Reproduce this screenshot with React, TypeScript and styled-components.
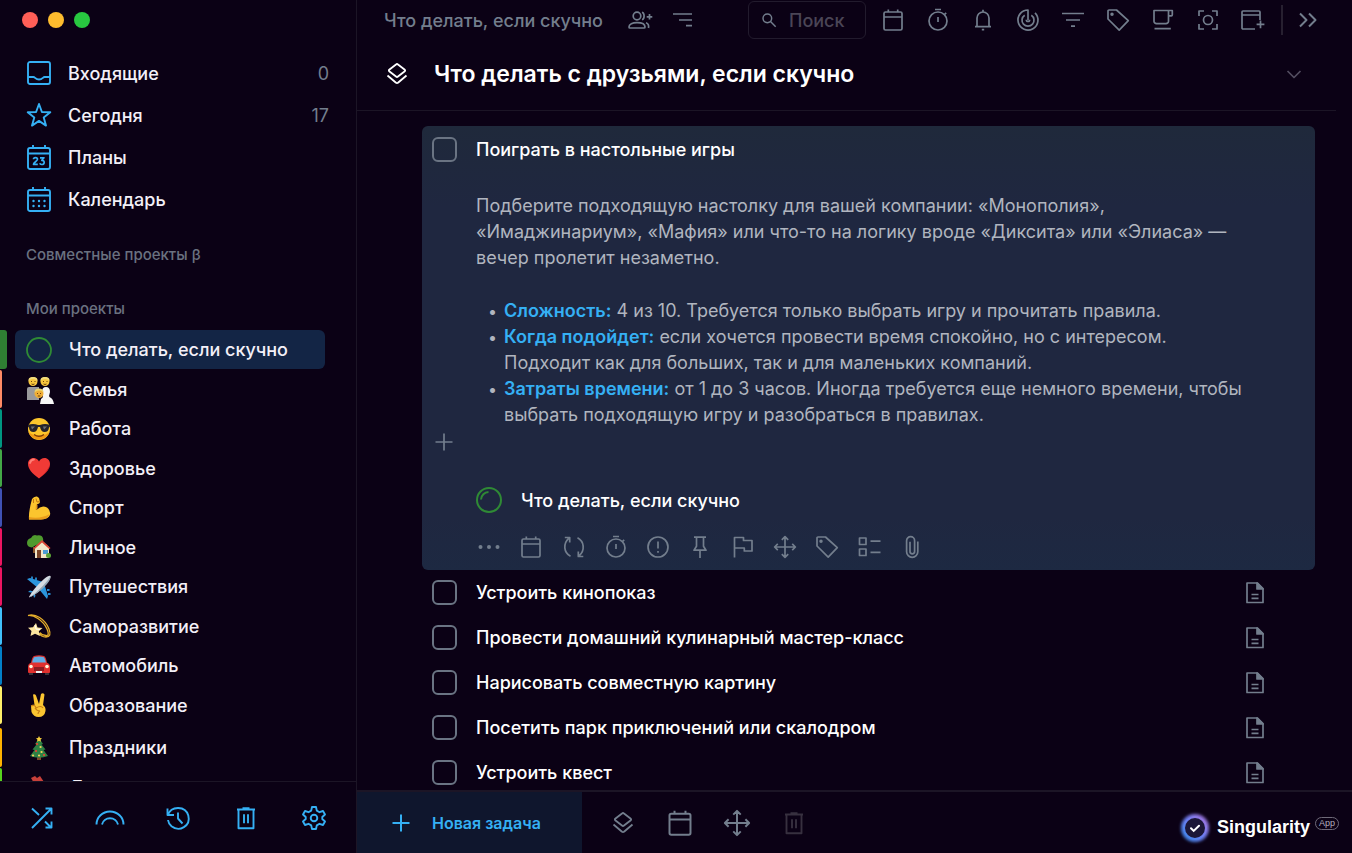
import React from 'react';
import styled, { createGlobalStyle } from 'styled-components';

const color = {
  page: '#0b0115',
  line: '#1c1526',
  blue: '#35b0f4',
  text: '#f3f0f8',
  muted: '#737e8d',
  faint: '#4a4556',
  card: '#1f2740',
  active: '#132545',
};

const GlobalStyle = createGlobalStyle`
  *, *::before, *::after { box-sizing: border-box; }
  body {
    margin: 0;
    background: ${color.page};
    color: ${color.text};
    font-family: Inter, "Noto Sans", sans-serif;
    font-size: 18px;
    font-weight: 500;
  }
  button, input { font: inherit; color: inherit; }
  ul, h1, h2, p { margin: 0; padding: 0; }
  ul { list-style: none; }
`;

/* ---------- icons ---------- */

const shapes: Record<string, React.ReactNode> = {
  inbox: (
    <>
      <rect x="1" y="1" width="22" height="22" rx="2" />
      <path d="M1 16h5.500c1.500 0 2 2.500 5.500 2.500s4-2.500 5.500-2.500H23" />
    </>
  ),
  star: <path d="M12 1l2.900 8 8.400.3-6.600 5.100 2.300 8.200L12 17.900 5 22.600l2.300-8.200L.7 9.300 9.100 9z" />,
  plans: (
    <>
      <rect x="1" y="3" width="22" height="21" rx="2" />
      <path d="M1 8.500h22M6 0v3M18 0v3" />
      <path d="M6.500 14.300c0-2.300 4-2.300 4 0 0 1.600-4 3.300-4 5h4.300M13 12.800h4l-2.200 2.500c3.200 0 3.200 4.200-.2 4.200-1.100 0-1.600-.6-1.800-1.200" strokeWidth="1.700" />
    </>
  ),
  calendarDots: (
    <>
      <rect x="1" y="3" width="22" height="21" rx="2" />
      <path d="M1 8.500h22M6 0v3M18 0v3" />
      <path d="M6.500 14h.01M12 14h.01M17.500 14h.01M6.500 19h.01M12 19h.01M17.500 19h.01" strokeWidth="2.400" strokeLinecap="round" />
    </>
  ),
  calendar: (
    <>
      <rect x="3" y="4" width="18" height="18" rx="1.500" />
      <path d="M3 9h18M7.300 1.500V4M16.700 1.500V4" />
    </>
  ),
  timer: (
    <>
      <circle cx="12" cy="13" r="9" />
      <path d="M9 1.500h6M12 9v5M18.500 6.500l1.700-1.700" />
    </>
  ),
  bell: <path d="M6 18.500V10a6 6 0 0 1 12 0v8.500M4 18.700h16M12 1.800V4M10.800 21.700h2.400" />,
  radar: (
    <>
      <path d="M12 12V2a10 10 0 1 0 7 2.900" />
      <path d="M8.700 7.200a6 6 0 1 0 6.600 0" />
      <path d="M10.300 11.700a1.700 1.700 0 1 0 3.400 0" />
    </>
  ),
  filter: <path d="M1 5.500h22M5 12h14M10 18.200h4" />,
  tag: (
    <>
      <path d="M2 3a1 1 0 0 1 1-1h7.500L22.300 12.700l-9.100 9.400L2 11z" />
      <circle cx="6" cy="6.300" r=".9" />
    </>
  ),
  cup: (
    <path d="M17.500 2.500H3v10.700a2.500 2.500 0 0 0 2.500 2.500H15a2.500 2.500 0 0 0 2.500-2.500V2.500h3.800v4.300a1 1 0 0 1-1 1H17.500M3.500 20.700h16.300" />
  ),
  focus: (
    <>
      <path d="M3 8V3h5M16 3h5v5M21 16v5h-5M8 21H3v-5" />
      <circle cx="12" cy="12" r="4.500" />
    </>
  ),
  windowPlus: (
    <>
      <path d="M14 21H2a1 1 0 0 1-1-1V4a1 1 0 0 1 1-1h16a1 1 0 0 1 1 1v8M1 7h18" />
      <path d="M19.500 12.500v7.800M15.600 16.400h7.800" />
    </>
  ),
  chevrons: <path d="M4 5.500l6.500 6.500L4 18.500M13 5.500l6.500 6.500-6.500 6.500" strokeWidth="2" />,
  chevronDown: <path d="M5.500 9l6.500 6.500L18.500 9" />,
  usersPlus: (
    <>
      <circle cx="9" cy="8" r="3.800" />
      <path d="M1 19c0-3 3.500-4.300 8-4.300s8 1.300 8 4.300c0 .7-.4 1-1 1H2c-.6 0-1-.3-1-1z" />
      <path d="M14 4.200c2.800.8 2.800 6.800 0 7.600M18 14.800c2.200.8 3 2.600 2.500 5.200M21.500 6v5.600M18.700 8.800h5.600" />
    </>
  ),
  sort: <path d="M2 6h19M8 12h13M15 17.700h6" />,
  search: (
    <>
      <circle cx="9.500" cy="9.500" r="6.500" />
      <path d="M14.300 14.300L22 22" />
    </>
  ),
  layers: (
    <>
      <path d="M11 2.500a1.500 1.500 0 0 1 2 0l6.800 5.300a.9.900 0 0 1 0 1.400L13 14.500a1.500 1.500 0 0 1-2 0L4.200 9.200a.9.900 0 0 1 0-1.400z" />
      <path d="M2.500 13.500l8.500 7.200a1.500 1.500 0 0 0 2 0l8.500-7.200" />
    </>
  ),
  plus: <path d="M12 3.500v17M3.500 12h17" />,
  dots: (
    <g fill="currentColor" stroke="none">
      <circle cx="3.500" cy="12" r="2" />
      <circle cx="12" cy="12" r="2" />
      <circle cx="20.500" cy="12" r="2" />
    </g>
  ),
  repeat: (
    <path d="M8.500 21.200C1.500 17.500 1 8.500 6.700 3.300M2.800 2.500h4.900v5M15.500 2.800c7 3.700 7.500 12.700 1.800 17.900M21.300 21.500h-5v-5" />
  ),
  alert: (
    <>
      <circle cx="12" cy="12" r="10" />
      <path d="M12 6.500v7M12 16v1.800" />
    </>
  ),
  pin: <path d="M6 2.200h12M8.500 2.200v9L6 15.200h12l-2.500-4v-9M12 15.200V23" />,
  flag: <path d="M3.500 22.500V2.500h9v3h8.500V16h-7.700v-3H3.500" />,
  move: (
    <path d="M12 1.800v20.400M1.800 12h20.400M8.800 4.800L12 1.600l3.200 3.200M8.800 19.200l3.200 3.200 3.200-3.200M4.800 8.800L1.600 12l3.200 3.200M19.200 8.800l3.200 3.200-3.200 3.200" />
  ),
  checklist: (
    <>
      <rect x="1.500" y="3" width="6.500" height="6.500" />
      <rect x="1.500" y="14" width="6.500" height="6.500" />
      <path d="M12.500 6.200H22.500M12.500 17.300H22.500" />
    </>
  ),
  clip: <path d="M17.800 6.500v10.200a5.600 5.600 0 0 1-11.200 0V5.700a4 4 0 0 1 8 0v10.800a2.300 2.300 0 0 1-4.600 0V6.700" />,
  doc: (
    <>
      <path d="M4 2h10.500L20 7.500V21.500H4zM8.500 13.500h7M8.500 17.300h7" />
      <path d="M14 2v6h6z" fill="currentColor" />
    </>
  ),
  shuffle: <path d="M2 22L21 3M15.500 2.500H21.500v6M2 2.500l7 6.500M15 15.500l6 6M21.500 15.500v6h-6" />,
  rainbow: <path d="M-1.500 18.500a13.500 13 0 0 1 27 0M4 18.500a8.200 8 0 0 1 16 0" />,
  history: <path d="M2 9C5-.5 19.500-.5 22.300 9.500 25 20 13.500 26.500 5.500 20.200 3.500 18.500 2.300 16.500 2 14M1.500 2.500V9h6.500M12 6.500v6l4.500 5" />,
  trash: <path d="M3 3.500h18M8.500 2.300h7M4.500 3.500V22.200h15V3.500M10 8.300v9M14 8.300v9" />,
  gear: (
    <>
      <path d="M10 1h4l.8 3.600 2.700 1.600L21 5l2 3.500-2.700 2.500v2L23 15.500 21 19l-3.500-1.200-2.700 1.600L14 23h-4l-.8-3.600-2.700-1.600L3 19l-2-3.500L3.700 13v-2L1 8.500 3 5l3.500 1.200 2.700-1.600z" />
      <circle cx="12" cy="12" r="3.300" />
    </>
  ),
};

const Svg = styled.svg`
  display: block;
  flex: none;
  overflow: visible;
  fill: none;
  stroke: currentColor;
  stroke-linejoin: round;
`;

const Icon = ({ name, size = 24, weight = 1.7 }: { name: string; size?: number; weight?: number }) => (
  <Svg viewBox="0 0 24 24" width={size} height={size} strokeWidth={weight} aria-hidden="true">
    {shapes[name]}
  </Svg>
);

const pictures: Record<string, React.ReactNode> = {
  circle: <circle cx="12" cy="12" r="12" fill="none" stroke="#2f8a35" strokeWidth="1.800" />,
  family: (
    <>
      <path d="M0 12q0-2 2-2h10v13H0z" fill="#9a9a9c" />
      <path d="M13 27l1-5q2-1 2-3l-1-4q0-5 4-5t4 5l-1 4q0 1 2 2 2 1 3 6z" fill="#f7f7f7" />
      <circle cx="6" cy="4.500" r="4.500" fill="#f8c63d" />
      <circle cx="18" cy="4.500" r="4.500" fill="#f8c63d" />
      <path d="M1.500 4Q1 0 6 0t4.500 4Q9 2 6 2T1.500 4zM13.500 4Q13 0 18 0t4.500 4Q21 2 18 2t-4.500 2z" fill="#f1dc7c" />
      <circle cx="12" cy="16.500" r="4.500" fill="#f0ae36" />
      <path d="M7.500 15.500q0-4 4.500-4t4.500 4q-2-2-4.500-2t-4.500 2z" fill="#ead26b" />
      <path d="M4 4.500h1M7.500 4.500h1M16 4.500h1M19.500 4.500h1M10 16.500h1M13 16.500h1M4.500 7q1.500 1 3 0M16.500 7q1.500 1 3 0M10.800 19h2.500" stroke="#71420d" fill="none" />
    </>
  ),
  cool: (
    <>
      <circle cx="12" cy="12" r="11" fill="#fcc62c" />
      <path d="M1.500 15a11 11 0 0 0 21 0Q12 23 1.500 15z" fill="#f09a16" />
      <path d="M1 8q5-2 10 0h2q5-2 10 0v1.500l-1 1q-.5 4.500-4.500 4.500-3.500 0-4.500-5h-2q-1 5-4.500 5Q2.500 15 2 10.500l-1-1z" fill="#26242b" />
      <path d="M4 9.500h4l-3 3zM16 9.500h4l-3 3z" fill="#6c7177" />
      <path d="M7 17.500q5 3.500 10 0" stroke="#7b3b08" strokeWidth="1.400" fill="none" />
    </>
  ),
  heart: (
    <>
      <path d="M12 22.500C5 17.500 1 13 1 7.800 1 4.500 3.300 2 6.500 2 9 2 11 3.300 12 5.500 13 3.300 15 2 17.500 2 20.700 2 23 4.500 23 7.800c0 5.200-4 9.700-11 14.700z" fill="#f03a36" />
      <path d="M3 7q1-3.500 4-3.500" stroke="#ff8077" strokeWidth="1.800" fill="none" strokeLinecap="round" />
      <path d="M12 22.500c6-4.500 10-8.500 10.800-13Q19 17 12 22.500z" fill="#bf171c" />
    </>
  ),
  muscle: (
    <>
      <path d="M5 3q2-3 5-2.500l2 1.500 1 4q-.5 2.500-3 2l-.5 6q5-5.500 10.500-2.500 4 3 3 7.500-1.500 4-9 4.500H2q-.7-7 3-20.500z" fill="#fbc52e" />
      <path d="M2 21q11 2.500 20.500-3-2 5.500-8.500 5.500H2zM9 8.500L8.500 14l2-1.500 0-4z" fill="#e99d1b" />
      <path d="M6.500 3v4M9 2.500l1 3.500 2.500-.5" stroke="#c67a12" fill="none" />
    </>
  ),
  house: (
    <>
      <path d="M0 8q0-4 4-5 2-4 6-2.500 5-1 6 3 1 3-2 5-5 1-9 4Q0 12 0 8z" fill="#4f9a2e" />
      <path d="M6 12h3v6H6z" fill="#865329" />
      <path d="M8 23V12l7-6 7 6v11z" fill="#f2e6c8" />
      <path d="M6.500 13L15 5l8.500 8-1 1.200L15 7.500l-7.500 6.700z" fill="#d94635" />
      <path d="M10 15h4v8h-4z" fill="#7a4427" />
      <path d="M16 15h5v4h-5z" fill="#4e9dd5" />
      <circle cx="21.500" cy="20.500" r="2.500" fill="#5ba336" />
    </>
  ),
  plane: (
    <>
      <path d="M0 4l3-1 13 4-5 6zM20 24l1-3-4-13-6 5z" fill="#2b95dc" />
      <path d="M1 17l2-1.500 5 1.500-1 1zM7 23l1.500-2L7 16l-1 1z" fill="#2b95dc" />
      <path d="M2 22q4-8 15-18 5-4 6.500-3 1 1.500-3 6.500-9 11-18.500 15z" fill="#d5dce2" />
      <path d="M3 22q9-6 18-17l2-3q1 2-3 7-9 10-17 13z" fill="#94a7b5" />
      <path d="M5 4V1.500M9 5V2.500M20 15h2.500M21 19h2.500" stroke="#278bd0" strokeWidth="1.800" />
    </>
  ),
  dizzy: (
    <>
      <path d="M1 1.500C8-1 18 5 22 15q3 8-3 8-5 0-7-4M1 1.500C7 1 16 6 20 15q3 7-1 6.500-4 0-6-3" stroke="#e5ae2b" strokeWidth="1.300" fill="none" />
      <path d="M9 9l1.500 4.500 5 .5-3.700 3.200L13 22l-5-2.300L3.500 22l1-5L1 13.700l5-.5z" fill="#fce6a0" />
      <path d="M8 11l1 4 4 .5" stroke="#fff" fill="none" />
    </>
  ),
  car: (
    <>
      <path d="M2 17h4v4H2zM18 17h4v4h-4z" fill="#37323a" />
      <path d="M4 9q1-6 3-7 5-1.500 10 0 2 1 3 7z" fill="#d92e2b" />
      <path d="M5 9q1-5 2.500-6 4.500-1 9 0Q18 4 19 9z" fill="#62aee5" />
      <path d="M1 13q0-4 4-4.500h14q4 .5 4 4.500v5q0 1-1 1H2q-1 0-1-1z" fill="#e0302e" />
      <path d="M7 13h10v4H7z" fill="#8c1e22" />
      <circle cx="4" cy="12.500" r="1.800" fill="#fff6da" />
      <circle cx="20" cy="12.500" r="1.800" fill="#fff6da" />
      <path d="M9 17h6v2H9z" fill="#eee" />
    </>
  ),
  victory: (
    <>
      <path d="M6 1.500q2-1 3 1L12 11l2-10q2-1.500 3.500.5L16 12q3 2 2.500 6-1 6-7 6-5 0-7-5L4 13q1-2 3.500-1z" fill="#fbc531" />
      <path d="M4 13q4-2 5 2 5-3 7 0M8 15q2 3 5 3-2 1-2 3" stroke="#c77f16" strokeWidth="1.200" fill="none" />
    </>
  ),
  tree: (
    <>
      <path d="M10 20h4v4h-4z" fill="#7e4a2b" />
      <path d="M12 2l4 6-1.500.5 4 5-2 .5 4.500 6q-9 3.500-18 0l4.500-6-2-.5 4-5L8 8z" fill="#2f8144" />
      <path d="M12 0l1 2 2 .2-1.500 1.500.5 2-2-1-2 1 .5-2L9 2.200l2-.2z" fill="#f5ce3c" />
      <path d="M10 8h.1M9 15h.1M17 19h.1" stroke="#e94435" strokeWidth="2.200" strokeLinecap="round" />
      <path d="M13.500 11h.1M6 19.500h.1M14.500 16h.1M12 19.500h.1" stroke="#f3cf5f" strokeWidth="2.200" strokeLinecap="round" />
    </>
  ),
  tent: (
    <>
      <path d="M4 3l4-2 2 2 3-2 4 6-9 3z" fill="#c8403a" />
      <path d="M3 8h16v14H3z" fill="#a53b34" />
    </>
  ),
};

const Picture = ({ name, size = 24 }: { name: string; size?: number }) => (
  <svg viewBox="0 0 24 24" width={size} height={size} overflow="visible" aria-hidden="true">
    {pictures[name]}
  </svg>
);

/* ---------- shared parts ---------- */

const IconButton = styled.button<{ $tone?: string }>`
  display: flex;
  align-items: center;
  justify-content: center;
  flex: none;
  min-width: 24px;
  height: 24px;
  padding: 0;
  border: 0;
  background: none;
  color: ${(p) => p.$tone ?? color.muted};
  cursor: pointer;
`;

const Checkbox = styled.input`
  appearance: none;
  flex: none;
  width: 25px;
  height: 25px;
  margin: 0;
  border: 2px solid #6a7483;
  border-radius: 6px;
  &:checked { background: ${color.blue}; }
`;

/* ---------- sidebar ---------- */

const Shell = styled.div`
  display: grid;
  grid-template-columns: 357px minmax(0, 1fr);
  height: 100vh;
  overflow: hidden;
`;

const Sidebar = styled.aside`
  display: flex;
  flex-direction: column;
  min-height: 0;
  border-right: 1px solid ${color.line};
`;

const WindowControls = styled.div`
  display: flex;
  flex: none;
  gap: 10px;
  height: 52px;
  padding: 12px 22px 0;
`;

const Light = styled.button<{ $fill: string }>`
  width: 16px;
  height: 16px;
  padding: 0;
  border: 0;
  border-radius: 50%;
  background: ${(p) => p.$fill};
`;

const NavLink = styled.a`
  display: flex;
  align-items: center;
  gap: 17px;
  height: 42px;
  padding: 0 27px;
  color: ${color.text};
  text-decoration: none;
  svg { color: ${color.blue}; }
`;

const Count = styled.span`
  margin-left: auto;
  color: ${color.muted};
  font-weight: 400;
`;

const SectionLabel = styled.h2`
  flex: none;
  height: 20px;
  margin: 25px 26px 9px;
  color: #6a7180;
  font-size: 15px;
  font-weight: 500;
  line-height: 20px;
`;

const ProjectList = styled.ul`
  flex: 1;
  min-height: 0;
  margin-top: 2px;
  overflow: hidden;
`;

const ProjectItem = styled.li<{ $strip: string; $active?: boolean; $spaced?: boolean }>`
  display: flex;
  align-items: stretch;
  height: 40px;
  padding-bottom: 1px;
  margin-top: ${(p) => (p.$spaced ? '3px' : '0')};
  &:nth-child(even) { height: 39px; }
  &::before {
    content: '';
    flex: none;
    width: ${(p) => (p.$active ? '7px' : '2px')};
    margin-right: ${(p) => (p.$active ? '8px' : '13px')};
    border-radius: 0 3px 3px 0;
    background: ${(p) => p.$strip};
  }
`;

const ProjectLink = styled.a<{ $active?: boolean }>`
  display: flex;
  align-items: center;
  gap: 18px;
  flex: 1;
  margin-right: 31px;
  padding: 0 12px;
  border-radius: 6px;
  background: ${(p) => (p.$active ? color.active : 'transparent')};
  color: ${color.text};
  text-decoration: none;
`;

const SidebarFooter = styled.footer`
  display: flex;
  flex: none;
  align-items: center;
  gap: 44px;
  height: 72px;
  padding: 0 30px;
  border-top: 1px solid ${color.line};
`;

/* ---------- main area ---------- */

const Main = styled.main`
  display: flex;
  flex-direction: column;
  min-height: 0;
`;

const TopBar = styled.header`
  display: flex;
  flex: none;
  align-items: center;
  height: 40px;
  padding: 0 32px 0 27px;
`;

const Crumb = styled.a`
  margin-right: 25px;
  color: ${color.muted};
  text-decoration: none;
  white-space: nowrap;
`;

const CrumbActions = styled.div`
  display: flex;
  gap: 19px;
`;

const SearchBox = styled.label`
  display: flex;
  align-items: center;
  gap: 12px;
  width: 118px;
  height: 38px;
  margin-left: auto;
  padding: 0 12px;
  border: 1px solid #221b2d;
  border-radius: 6px;
  color: ${color.muted};
`;

const SearchInput = styled.input`
  width: 100%;
  min-width: 0;
  padding: 0;
  border: 0;
  outline: 0;
  background: none;
  &::placeholder { color: ${color.faint}; opacity: 1; }
`;

const Tools = styled.div`
  display: flex;
  gap: 21px;
  margin-left: 15px;
`;

const Divider = styled.span`
  width: 2px;
  height: 30px;
  margin: 0 13px 0 16px;
  background: #272030;
`;

const Heading = styled.div`
  display: flex;
  flex: none;
  align-items: center;
  height: 71px;
  margin-right: 16px;
  padding: 0 30px 3px 28px;
  border-bottom: 1px solid ${color.line};
  color: #ffffff;
`;

const Title = styled.h1`
  flex: 1;
  margin-left: 25px;
  font-size: 23px;
  font-weight: 600;
  line-height: 32px;
`;

const Tasks = styled.div`
  flex: 1;
  min-height: 0;
  padding: 15px 37px 0 65px;
  overflow: hidden;
`;

const TaskCard = styled.section`
  padding: 10px 10px 11px;
  border-radius: 6px;
  background: linear-gradient(#1f293b, ${color.card} 18%, ${color.card} 88%, #1d2942);
`;

const TaskHead = styled.div`
  display: flex;
  align-items: center;
  gap: 19px;
  height: 26px;
`;

const TaskLabel = styled.label`
  flex: 1;
  color: #ffffff;
`;

const Notes = styled.div`
  margin: 31px 44px 0;
  color: #b0b5bf;
  font-weight: 400;
  line-height: 26px;
  p { margin-bottom: 27px; }
`;

const Bullet = styled.li`
  display: flex;
  &::before {
    content: '•';
    flex: none;
    width: 16px;
    margin-left: 12px;
    font-size: 16px;
  }
  b { color: ${color.blue}; font-weight: 600; }
`;

const AddRow = styled.div`
  display: flex;
  align-items: center;
  height: 28px;
`;

const ProjectRef = styled.a`
  display: flex;
  align-items: center;
  gap: 19px;
  height: 26px;
  margin: 31px 0 22px 44px;
  color: #ffffff;
  text-decoration: none;
`;

const CardTools = styled.div`
  display: flex;
  justify-content: space-between;
  width: 447px;
  margin-left: 45px;
`;

const TaskRow = styled.li`
  display: flex;
  align-items: center;
  gap: 19px;
  height: 45px;
  padding: 0 48px 0 10px;
`;

const BottomBar = styled.footer`
  display: flex;
  flex: none;
  align-items: center;
  height: 63px;
  padding-right: 13px;
  border-top: 2px solid ${color.line};
`;

const NewTask = styled.button`
  display: flex;
  align-items: center;
  gap: 19px;
  width: 225px;
  height: 100%;
  padding: 0 32px;
  border: 0;
  background: #0f162d;
  color: ${color.blue};
  font-size: 16px;
  font-weight: 600;
`;

const BottomTools = styled.div`
  display: flex;
  gap: 29px;
  margin-left: 27px;
`;

const BottomTool = styled(IconButton)`
  width: 28px;
`;

const Brand = styled.div`
  display: flex;
  align-items: center;
  gap: 5px;
  margin: 10px 0 0 auto;
  color: #ffffff;
  font-family: "Liberation Sans", Arial, sans-serif;
  font-size: 18px;
  font-weight: 700;
  svg { margin-right: 2px; }
`;

const AppPill = styled.span`
  align-self: flex-start;
  margin-top: 4px;
  padding: 0 3px;
  border: 1px solid #6f6a79;
  border-radius: 7px;
  color: #b4b0bd;
  font-size: 9px;
  font-weight: 400;
  line-height: 11px;
`;

const BrandMark = () => (
  <svg width="30" height="30" viewBox="0 0 30 30" overflow="visible" aria-hidden="true">
    <defs>
      <linearGradient id="ring" x1="0" y1="1" x2="1" y2="0">
        <stop offset="0" stopColor="#3a86e6" />
        <stop offset=".5" stopColor="#6c7df0" />
        <stop offset="1" stopColor="#a473dc" />
      </linearGradient>
      <filter id="glow" x="-30%" y="-30%" width="160%" height="160%">
        <feGaussianBlur stdDeviation="1.500" />
      </filter>
    </defs>
    <circle cx="15" cy="15" r="12" fill="none" stroke="url(#ring)" strokeWidth="4" filter="url(#glow)" />
    <circle cx="15" cy="15" r="11" fill="#1c1738" stroke="url(#ring)" strokeWidth="2" />
    <path d="M11 15.200l2.700 2.700 5.300-5.200" fill="none" stroke="#fff" strokeWidth="2" strokeLinecap="round" />
  </svg>
);

/* ---------- data ---------- */

const nav = [
  { icon: 'inbox', label: 'Входящие', count: '0' },
  { icon: 'star', label: 'Сегодня', count: '17' },
  { icon: 'plans', label: 'Планы' },
  { icon: 'calendarDots', label: 'Календарь' },
];

const projects = [
  { picture: 'circle', label: 'Что делать, если скучно', strip: '#2f7f33', active: true },
  { picture: 'family', label: 'Семья', strip: '#ff8a65' },
  { picture: 'cool', label: 'Работа', strip: '#009681' },
  { picture: 'heart', label: 'Здоровье', strip: '#43a847' },
  { picture: 'muscle', label: 'Спорт', strip: '#3f51b5' },
  { picture: 'house', label: 'Личное', strip: '#ec1561' },
  { picture: 'plane', label: 'Путешествия', strip: '#ec1561' },
  { picture: 'dizzy', label: 'Саморазвитие', strip: '#40c0fb' },
  { picture: 'car', label: 'Автомобиль', strip: '#0280c8' },
  { picture: 'victory', label: 'Образование', strip: '#fff06a' },
  { picture: 'tree', label: 'Праздники', strip: '#ffb300', spaced: true },
  { picture: 'tent', label: 'Дом', strip: '#56d41d' },
];

const sidebarTools = [
  ['shuffle', 'Перемешать'],
  ['rainbow', 'Радуга'],
  ['history', 'История'],
  ['trash', 'Корзина'],
  ['gear', 'Настройки'],
];

const topTools = [
  ['calendar', 'Календарь'],
  ['timer', 'Таймер'],
  ['bell', 'Уведомления'],
  ['radar', 'Привычки'],
  ['filter', 'Фильтр'],
  ['tag', 'Теги'],
  ['cup', 'Перерыв'],
  ['focus', 'Фокус'],
  ['windowPlus', 'Новое окно'],
];

const cardTools = [
  ['dots', 'Ещё'],
  ['calendar', 'Дата'],
  ['repeat', 'Повтор'],
  ['timer', 'Таймер'],
  ['alert', 'Приоритет'],
  ['pin', 'Закрепить'],
  ['flag', 'Флаг'],
  ['move', 'Переместить'],
  ['tag', 'Теги'],
  ['checklist', 'Чек-лист'],
  ['clip', 'Вложение'],
];

const tasks = [
  'Устроить кинопоказ',
  'Провести домашний кулинарный мастер-класс',
  'Нарисовать совместную картину',
  'Посетить парк приключений или скалодром',
  'Устроить квест',
];

export default function App() {
  return (
    <Shell>
      <GlobalStyle />
      <Sidebar>
        <WindowControls>
          <Light $fill="#ff5f57" aria-label="Закрыть" />
          <Light $fill="#febc2e" aria-label="Свернуть" />
          <Light $fill="#28c840" aria-label="Развернуть" />
        </WindowControls>
        <nav>
          {nav.map((item) => (
            <NavLink href="#" key={item.label}>
              <Icon name={item.icon} weight={1.9} />
              {item.label}
              {item.count && <Count>{item.count}</Count>}
            </NavLink>
          ))}
        </nav>
        <SectionLabel>Совместные проекты β</SectionLabel>
        <SectionLabel>Мои проекты</SectionLabel>
        <ProjectList>
          {projects.map((p) => (
            <ProjectItem key={p.label} $strip={p.strip} $active={p.active} $spaced={p.spaced}>
              <ProjectLink href="#" $active={p.active}>
                <Picture name={p.picture} />
                {p.label}
              </ProjectLink>
            </ProjectItem>
          ))}
        </ProjectList>
        <SidebarFooter>
          {sidebarTools.map(([icon, label]) => (
            <IconButton key={icon} $tone={color.blue} aria-label={label}>
              <Icon name={icon} weight={1.9} />
            </IconButton>
          ))}
        </SidebarFooter>
      </Sidebar>

      <Main>
        <TopBar>
          <Crumb href="#">Что делать, если скучно</Crumb>
          <CrumbActions>
            <IconButton aria-label="Участники"><Icon name="usersPlus" /></IconButton>
            <IconButton aria-label="Сортировка"><Icon name="sort" /></IconButton>
          </CrumbActions>
          <SearchBox>
            <Icon name="search" size={16} weight={2.2} />
            <SearchInput type="text" placeholder="Поиск" aria-label="Поиск" />
          </SearchBox>
          <Tools>
            {topTools.map(([icon, label]) => (
              <IconButton key={icon} aria-label={label}><Icon name={icon} /></IconButton>
            ))}
          </Tools>
          <Divider />
          <IconButton aria-label="Показать панель"><Icon name="chevrons" /></IconButton>
        </TopBar>

        <Heading>
          <Icon name="layers" weight={1.8} />
          <Title>Что делать с друзьями, если скучно</Title>
          <IconButton $tone="#534d60" aria-label="Свернуть раздел"><Icon name="chevronDown" /></IconButton>
        </Heading>

        <Tasks>
          <TaskCard>
            <TaskHead>
              <Checkbox type="checkbox" id="task-open" />
              <TaskLabel htmlFor="task-open">Поиграть в настольные игры</TaskLabel>
            </TaskHead>
            <Notes>
              <p>
                Подберите подходящую настолку для вашей компании: «Монополия»,
                <br />
                «Имаджинариум», «Мафия» или что-то на логику вроде «Диксита» или «Элиаса» —
                <br />
                вечер пролетит незаметно.
              </p>
              <ul>
                <Bullet>
                  <div><b>Сложность:</b> 4 из 10. Требуется только выбрать игру и прочитать правила.</div>
                </Bullet>
                <Bullet>
                  <div>
                    <b>Когда подойдет:</b> если хочется провести время спокойно, но с интересом.
                    <br />
                    Подходит как для больших, так и для маленьких компаний.
                  </div>
                </Bullet>
                <Bullet>
                  <div>
                    <b>Затраты времени:</b> от 1 до 3 часов. Иногда требуется еще немного времени, чтобы
                    <br />
                    выбрать подходящую игру и разобраться в правилах.
                  </div>
                </Bullet>
              </ul>
            </Notes>
            <AddRow>
              <IconButton aria-label="Добавить"><Icon name="plus" /></IconButton>
            </AddRow>
            <ProjectRef href="#">
              <Svg width="26" height="26" viewBox="0 0 26 26" color="#2f8a35" strokeWidth="2" aria-hidden="true">
                <circle cx="13" cy="13" r="12" />
                <path d="M5 12.500A8 8 0 0 1 12.500 5" />
              </Svg>
              Что делать, если скучно
            </ProjectRef>
            <CardTools>
              {cardTools.map(([icon, label]) => (
                <IconButton key={icon} aria-label={label}><Icon name={icon} /></IconButton>
              ))}
            </CardTools>
          </TaskCard>
          <ul>
            {tasks.map((task, i) => (
              <TaskRow key={task}>
                <Checkbox type="checkbox" id={`task-${i}`} />
                <TaskLabel htmlFor={`task-${i}`}>{task}</TaskLabel>
                <IconButton aria-label="Открыть заметку"><Icon name="doc" /></IconButton>
              </TaskRow>
            ))}
          </ul>
        </Tasks>

        <BottomBar>
          <NewTask>
            <Icon name="plus" weight={2} />
            Новая задача
          </NewTask>
          <BottomTools>
            <BottomTool aria-label="Раздел"><Icon name="layers" weight={1.8} /></BottomTool>
            <BottomTool aria-label="Дата"><Icon name="calendar" size={28} /></BottomTool>
            <BottomTool aria-label="Переместить"><Icon name="move" size={28} /></BottomTool>
            <BottomTool aria-label="Удалить" $tone="#37303f"><Icon name="trash" weight={1.9} /></BottomTool>
          </BottomTools>
          <Brand>
            <BrandMark />
            Singularity
            <AppPill>App</AppPill>
          </Brand>
        </BottomBar>
      </Main>
    </Shell>
  );
}
